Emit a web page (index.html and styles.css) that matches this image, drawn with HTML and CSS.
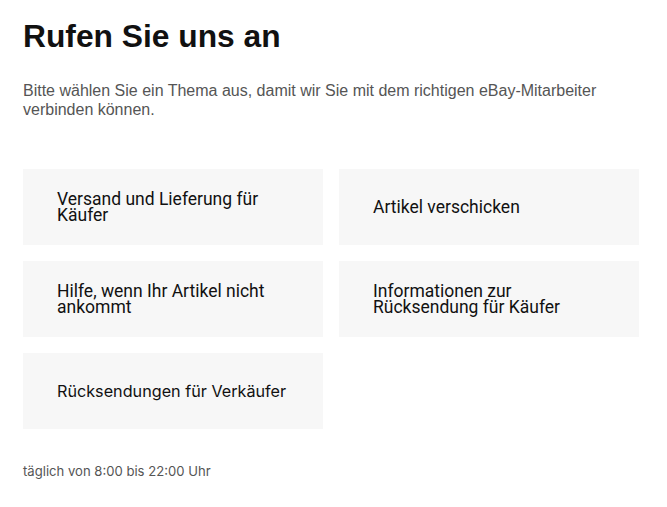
FILE: index.html
```html
<!DOCTYPE html>
<html lang="de">
<head>
    <meta charset="UTF-8">
    <meta name="viewport" content="width=device-width, initial-scale=1.0">
    <title>Rufen Sie uns an</title>
    <link rel="stylesheet" href="styles.css">
</head>
<body>

    <!-- Heading -->
    <h1 class="page-title">Rufen Sie uns an</h1>
    <p class="intro">Bitte wählen Sie ein Thema aus, damit wir Sie mit dem richtigen eBay-Mitarbeiter verbinden können.</p>

    <!-- Topic Tiles -->
    <div class="topic-grid">
        <a class="topic" href="#">Versand und Lieferung für Käufer</a>
        <a class="topic" href="#">Artikel verschicken</a>
        <a class="topic" href="#">Hilfe, wenn Ihr Artikel nicht ankommt</a>
        <a class="topic" href="#">Informationen zur Rücksendung für Käufer</a>
        <a class="topic wide-font" href="#">Rücksendungen für Verkäufer</a>
    </div>

    <!-- Opening Hours -->
    <p class="hours">täglich von 8:00 bis 22:00 Uhr</p>

</body>
</html>
```

FILE: styles.css
```css
body {
    font-family: "Liberation Sans", Arial, sans-serif;
    margin: 0;
    padding: 0 28px 0 23px;
    color: #111;
    background: #fff;
}

/* Heading */
.page-title {
    font-size: 31.75px;
    font-weight: bold;
    margin: 17px 0 0;
    line-height: 38px;
}

.intro {
    font-size: 16px;
    color: #555;
    line-height: 19px;
    margin: 26px 0 0;
    max-width: 600px;
}

/* Topic Tiles */
.topic-grid {
    display: grid;
    grid-template-columns: 300px 300px;
    gap: 16px 16px;
    margin-top: 50px;
}
.topic {
    display: flex;
    align-items: center;
    height: 76px;
    box-sizing: border-box;
    padding: 0 40px 0 34px;
    background: #f7f7f7;
    color: #111;
    text-decoration: none;
    font-family: Roboto, sans-serif;
    font-size: 17.5px;
    line-height: 16px;
}
.wide-font {
    font-family: Inter, sans-serif;
    font-size: 16.2px;
    padding-right: 10px;
}

/* Opening Hours */
.hours {
    font-family: Inter, sans-serif;
    font-size: 13.1px;
    color: #555;
    margin: 34px 0 0;
}
```
